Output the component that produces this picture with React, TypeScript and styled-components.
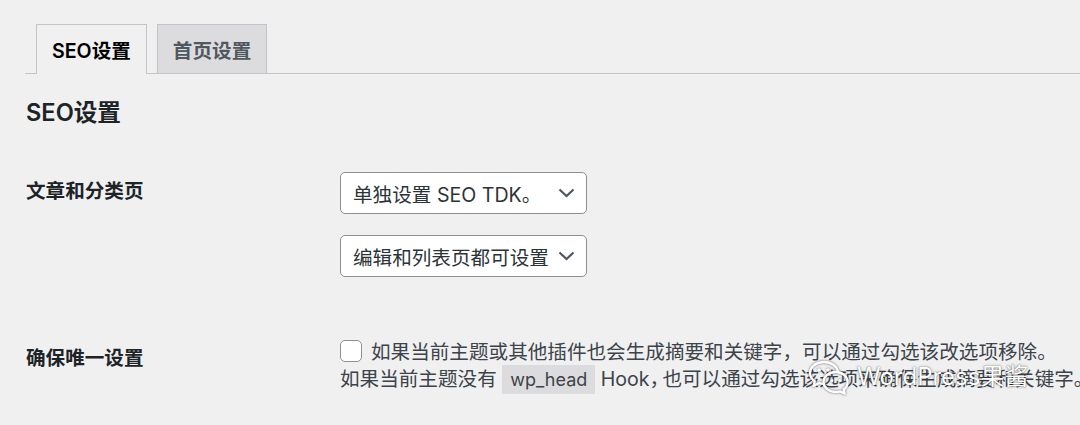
import styled, { createGlobalStyle } from 'styled-components';

const GlobalStyle = createGlobalStyle`
  html, body {
    margin: 0;
    padding: 0;
    background: #f0f0f1;
  }
  body {
    font-family: Inter, "Noto Sans CJK SC", "Noto Sans", sans-serif;
    color: #3c434a;
  }
`;

const Wrap = styled.div`
  width: 1080px;
  height: 425px;
  overflow: hidden;
  padding-left: 25px;
  box-sizing: border-box;
`;

// 顶部标签
const TabBar = styled.nav`
  display: flex;
  gap: 10px;
  margin-top: 24px;
  padding-left: 11px;
  border-bottom: 1px solid #c3c4c7;
`;

const Tab = styled.div<{ $active?: boolean }>`
  padding: 0 15px;
  display: flex;
  align-items: center;
  box-sizing: border-box;
  font-size: 19.6px;
  font-weight: 600;
  border: 1px solid #c3c4c7;
  border-bottom: none;
  margin-bottom: ${p => (p.$active ? '-1px' : '0')};
  height: ${p => (p.$active ? '50px' : '49px')};
  background: ${p => (p.$active ? '#f0f0f1' : '#dcdcde')};
  color: ${p => (p.$active ? '#000' : '#50575e')};
`;

const Heading = styled.h2`
  margin: 23px 0 23px 1px;
  font-size: 23.6px;
  line-height: 31px;
  font-weight: 600;
  color: #1d2327;
`;

const Row = styled.div<{ $bottom: number }>`
  display: grid;
  grid-template-columns: 315px 1fr;
  padding-bottom: ${p => p.$bottom}px;
`;

const Label = styled.div`
  padding-top: 28px;
  padding-left: 1px;
  font-size: 19.6px;
  line-height: 25px;
  font-weight: 600;
  color: #1d2327;
`;

const Field = styled.div`
  position: relative;
  padding-top: 21px;
  display: flex;
  flex-direction: column;
  gap: 21px;
`;

const SelectBox = styled.div`
  width: 247px;
  height: 42px;
  box-sizing: border-box;
  border: 1px solid #8c8f94;
  border-radius: 5px;
  background: #fff;
  padding: 0 11px 0 12px;
  display: flex;
  align-items: center;
  justify-content: space-between;
  font-size: 19.6px;
  color: #2c3338;
`;

const Chevron = () => (
  <svg width="17" height="10" viewBox="0 0 17 10">
    <polyline points="1.5,1.5 8.5,8 15.5,1.5" fill="none" stroke="#50575e" strokeWidth="2.2" />
  </svg>
);

const Desc = styled.p`
  margin: 0;
  font-size: 19.6px;
  line-height: 27px;
  color: #3c434a;
  white-space: nowrap;
`;

const Check = styled.span`
  display: inline-block;
  width: 22px;
  height: 22px;
  box-sizing: border-box;
  border: 1px solid #8c8f94;
  border-radius: 5px;
  background: #fff;
  vertical-align: -3px;
  margin-right: 9px;
`;

const Code = styled.code`
  font-family: Inter, "Noto Sans", sans-serif;
  font-size: 18px;
  background: #dcdcde;
  padding: 4px 8px 4px;
  color: #3c434a;
`;

const HalfPunct = styled.span`
  font-feature-settings: "halt";
  margin-right: 3px;
`;

// 公众号水印
const Watermark = styled.div`
  position: absolute;
  left: 467px;
  top: 41px;
  display: flex;
  align-items: center;
  gap: 6px;
  color: #fff;
  font-size: 24px;
  line-height: 30px;
  text-shadow: 0 0 1px rgba(0, 0, 0, 0.6), 0 0 3px rgba(0, 0, 0, 0.35);
  pointer-events: none;
`;

const WechatLogo = () => (
  <svg width="44" height="36" viewBox="0 0 44 36" style={{ filter: 'drop-shadow(0 0 1px rgba(0,0,0,0.6))' }}>
    <g fill="none" stroke="#fff" strokeWidth="2.4" strokeLinejoin="round">
      <path d="M17 3C9 3 3 8 3 14c0 3.4 1.9 6.3 4.8 8.3L6.5 27l5.2-2.8c1.7.5 3.4.7 5.3.7" />
      <path d="M17 3c7.2 0 13 4.3 13.9 9.8" />
      <path d="M29 13c-7 0-12.5 4.4-12.5 10S22 33 29 33c1.5 0 2.9-.2 4.2-.6l4.5 2.4-1.1-4.2c2.5-1.8 4-4.4 4-7.6 0-5.6-5.6-10-11.6-10z" />
    </g>
    <g fill="#fff">
      <circle cx="12" cy="11" r="1.8" />
      <circle cx="21" cy="11" r="1.8" />
      <circle cx="25" cy="21.5" r="1.5" />
      <circle cx="33" cy="21.5" r="1.5" />
    </g>
  </svg>
);

export default function App() {
  return (
    <Wrap>
      <GlobalStyle />
      <TabBar>
        <Tab $active>SEO设置</Tab>
        <Tab>首页设置</Tab>
      </TabBar>
      <Heading>SEO设置</Heading>

      <Row $bottom={41}>
        <Label>文章和分类页</Label>
        <Field>
          <SelectBox>
            <span>单独设置 SEO TDK。</span>
            <Chevron />
          </SelectBox>
          <SelectBox>
            <span>编辑和列表页都可设置</span>
            <Chevron />
          </SelectBox>
        </Field>
      </Row>

      <Row $bottom={0}>
        <Label>确保唯一设置</Label>
        <Field>
          <Desc>
            <Check />
            如果当前主题或其他插件也会生成摘要和关键字，可以通过勾选该改选项移除。
            <br />
            如果当前主题没有 <Code>wp_head</Code> Hook<HalfPunct>，</HalfPunct>也可以通过勾选该选项来确保生成摘要和关键字。
          </Desc>
          <Watermark>
            <WechatLogo />
            <span>WordPress果酱</span>
          </Watermark>
        </Field>
      </Row>
    </Wrap>
  );
}
